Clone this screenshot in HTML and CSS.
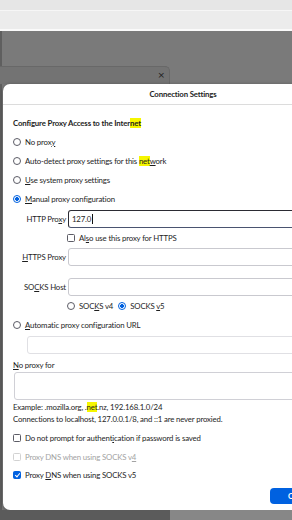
FILE: index.html
```html
<!DOCTYPE html>
<html lang="en">
<head>
<meta charset="UTF-8" />
<meta name="viewport" content="width=device-width, initial-scale=1" />
<title>Connection Settings</title>
<link rel="stylesheet" href="styles.css">
</head>
<body>
  <div class="bar-top"></div>
  <div class="bar-mid"></div>

  <div class="stage">
    <!-- tab of the window behind the dialog -->
    <div class="tab"><span class="tab-close">×</span></div>

    <div class="dialog" role="dialog" aria-label="Connection Settings">
      <div class="dialog-title">Connection Settings</div>

      <div class="dialog-body">
        <div class="heading">Configure Proxy Access to the Inter<mark>net</mark></div>

        <div class="opt"><span class="radio"></span><span>No prox<u>y</u></span></div>
        <div class="opt"><span class="radio"></span><span>Auto-detect proxy settings for this <mark>net</mark><u>w</u>ork</span></div>
        <div class="opt"><span class="radio"></span><span><u>U</u>se system proxy settings</span></div>
        <div class="opt"><span class="radio on"></span><span><u>M</u>anual proxy configuration</span></div>

        <div class="field first">
          <label>HTTP Pro<u>x</u>y</label>
          <div class="input focused">127.0<span class="caret"></span></div>
        </div>
        <div class="opt indent"><span class="check"></span><span>Al<u>s</u>o use this proxy for HTTPS</span></div>

        <div class="field">
          <label><u>H</u>TTPS Proxy</label>
          <div class="input"></div>
        </div>

        <div class="field socks">
          <label>SO<u>C</u>KS Host</label>
          <div class="input"></div>
        </div>
        <div class="opt indent"><span class="radio"></span><span>SOC<u>K</u>S v4</span><span class="radio on gap"></span><span>SOCKS <u>v</u>5</span></div>

        <div class="opt"><span class="radio"></span><span><u>A</u>utomatic proxy configuration URL</span></div>
        <div class="input url"></div>

        <div class="label-line"><u>N</u>o proxy for</div>
        <div class="input area"></div>

        <div class="note first">Example: .mozilla.org, .<mark>net</mark>.nz, 192.168.1.0/24</div>
        <div class="note">Connections to localhost, 127.0.0.1/8, and ::1 are never proxied.</div>

        <div class="checks">
          <div class="opt"><span class="check"></span><span>Do not prompt for authent<u>i</u>cation if password is saved</span></div>
          <div class="opt disabled"><span class="check"></span><span>Proxy DNS when using SOCKS v<u>4</u></span></div>
          <div class="opt"><span class="check on"></span><span>Proxy <u>D</u>NS when using SOCKS v5</span></div>
        </div>

        <div class="buttons">
          <button class="btn-primary">OK</button>
        </div>
      </div>
    </div>

    <div class="under"></div>
  </div>
</body>
</html>
```

FILE: styles.css
```css
:root {
  --color-text: #1e1e1e;
  --color-muted: #a3a3a3;
  --color-accent: #0061e0;
  --color-border: #c9c9cf;
  --color-backdrop: #7a7a7a;
  --font-family: Lato, "Noto Sans", sans-serif;
}

* {
  box-sizing: border-box;
}

html, body {
  margin: 0;
  overflow: hidden;
}

body {
  width: 292px;
  height: 520px;
  background: var(--color-backdrop);
  font-family: var(--font-family);
  font-size: 7.8px;
  letter-spacing: -0.15px;
  color: var(--color-text);
}

/* window chrome behind the dimmed overlay */
.bar-top {
  height: 11px;
  background: #e6e6e6;
  border-bottom: 1px solid #f6f6f6;
}

.bar-mid {
  height: 20px;
  background: #ececec;
  border-bottom: 2px solid #fafafa;
}

.stage {
  height: 489px;
  padding-top: 35px;
  border-left: 2px solid #5f5f5f;
  background: var(--color-backdrop);
}

.tab {
  width: 170px;
  height: 18px;
  margin-left: -2px;
  background: #737373;
  border-top: 1px solid #686868;
  border-right: 1px solid #686868;
  border-top-right-radius: 5px;
  display: flex;
  justify-content: flex-end;
  padding: 3px 4px 0 0;
}

.tab-close {
  font-family: "DejaVu Sans", sans-serif;
  font-size: 9px;
  line-height: 10px;
  color: #202020;
}

/* dialog */
.dialog {
  width: 330px;
  height: 426px;
  margin-left: 1px;
  background: #fff;
  border-radius: 7px 0 0 7px;
  box-shadow: 0 1px 4px rgba(0, 0, 0, 0.35);
}

.dialog-title {
  height: 21px;
  border-bottom: 1px solid #dcdcdc;
  text-align: center;
  line-height: 20px;
  font-weight: 700;
  padding-left: 30px;
}

.dialog-body {
  padding: 11px 14px 0 10px;
}

.heading {
  height: 14px;
  line-height: 14px;
  font-weight: 700;
  margin-bottom: 2px;
}

mark {
  background: #f6f600;
  color: inherit;
}

u {
  text-decoration-thickness: 1px;
  text-underline-offset: 1px;
}

.opt {
  display: flex;
  align-items: center;
  height: 19px;
  white-space: nowrap;
}

.opt.indent {
  padding-left: 54px;
}

.radio,
.check {
  flex: none;
  width: 8px;
  height: 8px;
  margin-right: 4px;
  border: 1px solid #5c5c66;
  background: #fff;
}

.radio {
  border-radius: 50%;
}

.radio.on {
  border-color: var(--color-accent);
  background: radial-gradient(circle, var(--color-accent) 0 1.6px, #fff 2.2px);
}

.radio.gap {
  margin-left: 5px;
}

.check {
  border-radius: 1.5px;
}

.check.on {
  border-color: var(--color-accent);
  background: var(--color-accent);
  position: relative;
}

.check.on::after {
  content: "";
  position: absolute;
  left: 2px;
  top: 0;
  width: 2px;
  height: 4px;
  border: solid #fff;
  border-width: 0 1.2px 1.2px 0;
  transform: rotate(40deg);
}

.opt.disabled {
  color: var(--color-muted);
}

.opt.disabled .check {
  border-color: #d2d2d2;
}

/* text fields */
.field {
  display: flex;
  align-items: center;
  height: 18px;
  margin-top: 1px;
}

.field.first {
  margin-top: 2px;
}

.field.socks {
  margin-top: 12px;
}

.field label {
  width: 53px;
  margin-right: 2px;
  text-align: right;
  white-space: nowrap;
}

.input {
  flex: 1;
  height: 18px;
  border: 1px solid var(--color-border);
  border-radius: 3px;
  background: #fff;
  padding-left: 3px;
  line-height: 16px;
}

.input.focused {
  border: 1px solid #2b2b33;
  border-bottom-color: #4a5470;
}

.caret {
  display: inline-block;
  width: 1px;
  height: 10px;
  margin-left: 1px;
  vertical-align: -2px;
  background: #111;
}

.input.url {
  margin: 2px 0 0 14px;
  border-color: #e0e0e4;
}

.label-line {
  height: 14px;
  line-height: 14px;
  margin-top: 4px;
}

.input.area {
  height: 28px;
  margin-left: 1px;
  border-color: #d0d0d6;
}

.note {
  height: 12px;
  line-height: 12px;
  white-space: nowrap;
}

.note.first {
  margin-top: 1px;
}

.checks {
  margin-top: 4px;
}

.checks .opt {
  height: 18.5px;
}

.buttons {
  display: flex;
  justify-content: flex-end;
  margin-top: 3px;
}

.btn-primary {
  margin-right: -2px;
  width: 51px;
  height: 16px;
  border: none;
  border-radius: 4px;
  background: var(--color-accent);
  color: #fff;
  font-family: var(--font-family);
  font-size: 7.8px;
  font-weight: 700;
  text-align: left;
  padding: 0 0 0 18px;
}

.under {
  height: 10px;
  margin-left: -2px;
  background: linear-gradient(to right, #5b5b5b 170px, #878787 170px);
}
```
